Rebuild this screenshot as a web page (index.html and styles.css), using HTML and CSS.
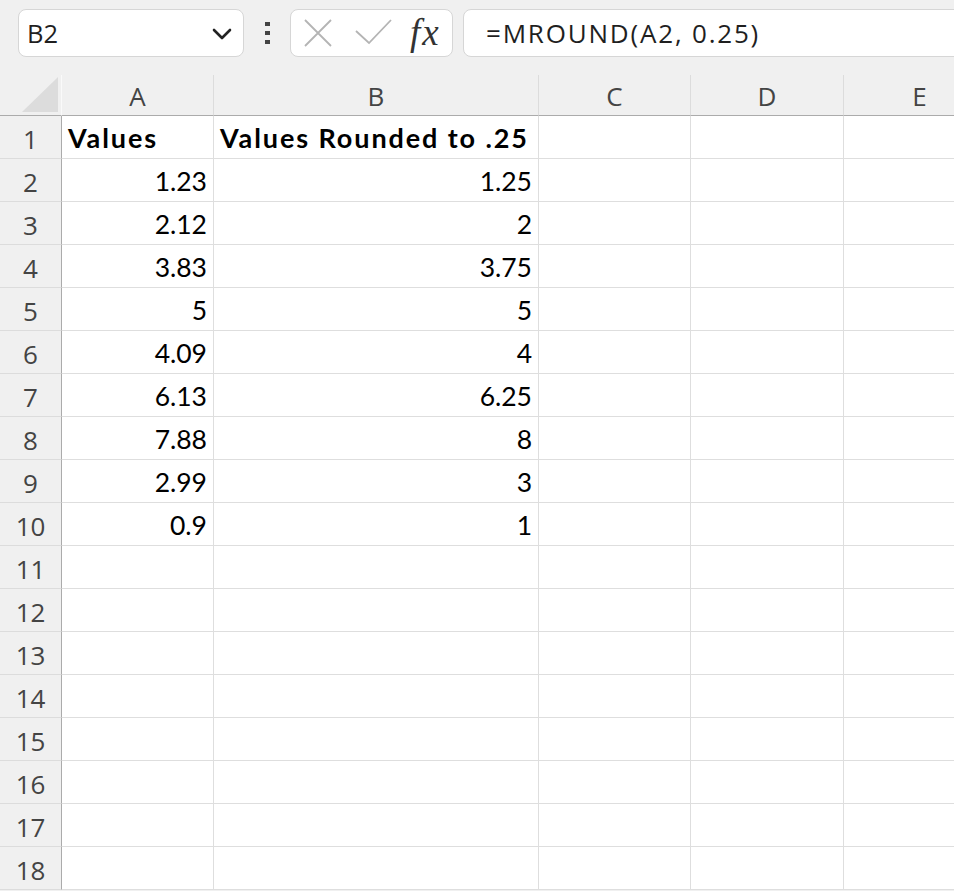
FILE: index.html
```html
<!DOCTYPE html>
<html>
<head>
<meta charset="utf-8">
<link rel="stylesheet" href="styles.css">
</head>
<body>
<div class="toolbar">
  <div class="namebox">
    <span class="name">B2</span>
    <svg class="chev" width="20" height="12" viewBox="0 0 20 12"><path d="M2 2 L10 10 L18 2" fill="none" stroke="#222" stroke-width="2.6" stroke-linecap="round" stroke-linejoin="round"/></svg>
  </div>
  <div class="dots"><span></span><span></span><span></span></div>
  <div class="fxbox">
    <svg class="ico" width="30" height="30" viewBox="0 0 30 30"><path d="M2 2 L28 28 M28 2 L2 28" stroke="#b4b4b4" stroke-width="1.8" fill="none"/></svg>
    <svg class="ico" width="38" height="30" viewBox="0 0 38 30"><path d="M1 13 L14 25 L36 2" stroke="#b4b4b4" stroke-width="1.8" fill="none"/></svg>
    <span class="fx">fx</span>
  </div>
  <div class="formula">=MROUND(A2, 0.25)</div>
</div>
<div class="sheet">
  <div class="corner"><div class="tri"></div></div>
  <div class="colh">A</div>
  <div class="colh">B</div>
  <div class="colh">C</div>
  <div class="colh">D</div>
  <div class="colh">E</div>

  <div class="rowh">1</div><div class="cell bold">Values</div><div class="cell bold">Values Rounded to .25</div><div class="cell"></div><div class="cell"></div><div class="cell"></div>
  <div class="rowh">2</div><div class="cell num">1.23</div><div class="cell num">1.25</div><div class="cell"></div><div class="cell"></div><div class="cell"></div>
  <div class="rowh">3</div><div class="cell num">2.12</div><div class="cell num">2</div><div class="cell"></div><div class="cell"></div><div class="cell"></div>
  <div class="rowh">4</div><div class="cell num">3.83</div><div class="cell num">3.75</div><div class="cell"></div><div class="cell"></div><div class="cell"></div>
  <div class="rowh">5</div><div class="cell num">5</div><div class="cell num">5</div><div class="cell"></div><div class="cell"></div><div class="cell"></div>
  <div class="rowh">6</div><div class="cell num">4.09</div><div class="cell num">4</div><div class="cell"></div><div class="cell"></div><div class="cell"></div>
  <div class="rowh">7</div><div class="cell num">6.13</div><div class="cell num">6.25</div><div class="cell"></div><div class="cell"></div><div class="cell"></div>
  <div class="rowh">8</div><div class="cell num">7.88</div><div class="cell num">8</div><div class="cell"></div><div class="cell"></div><div class="cell"></div>
  <div class="rowh">9</div><div class="cell num">2.99</div><div class="cell num">3</div><div class="cell"></div><div class="cell"></div><div class="cell"></div>
  <div class="rowh">10</div><div class="cell num">0.9</div><div class="cell num">1</div><div class="cell"></div><div class="cell"></div><div class="cell"></div>
  <div class="rowh">11</div><div class="cell"></div><div class="cell"></div><div class="cell"></div><div class="cell"></div><div class="cell"></div>
  <div class="rowh">12</div><div class="cell"></div><div class="cell"></div><div class="cell"></div><div class="cell"></div><div class="cell"></div>
  <div class="rowh">13</div><div class="cell"></div><div class="cell"></div><div class="cell"></div><div class="cell"></div><div class="cell"></div>
  <div class="rowh">14</div><div class="cell"></div><div class="cell"></div><div class="cell"></div><div class="cell"></div><div class="cell"></div>
  <div class="rowh">15</div><div class="cell"></div><div class="cell"></div><div class="cell"></div><div class="cell"></div><div class="cell"></div>
  <div class="rowh">16</div><div class="cell"></div><div class="cell"></div><div class="cell"></div><div class="cell"></div><div class="cell"></div>
  <div class="rowh">17</div><div class="cell"></div><div class="cell"></div><div class="cell"></div><div class="cell"></div><div class="cell"></div>
  <div class="rowh">18</div><div class="cell"></div><div class="cell"></div><div class="cell"></div><div class="cell"></div><div class="cell"></div>
</div>
</body>
</html>
```
FILE: styles.css
```css
html, body {
  margin: 0;
  padding: 0;
  background: #f0f0f0;
  overflow: hidden;
  width: 954px;
  height: 891px;
}
.toolbar {
  height: 75px;
  box-sizing: border-box;
  padding: 9px 0 0 18px;
  display: flex;
  align-items: flex-start;
  font-family: "Open Sans", sans-serif;
  color: #1f1f1f;
  width: 1100px;
}
.namebox {
  width: 226px;
  height: 48px;
  box-sizing: border-box;
  background: #fff;
  border: 1px solid #d6d6d6;
  border-radius: 8px;
  display: flex;
  align-items: center;
  justify-content: space-between;
  padding: 0 11px 0 8px;
}
.name {
  font-size: 25.5px;
  line-height: 46px;
}
.chev { display: block; margin-top: 2px; }
.dots {
  width: 46px;
  height: 48px;
  display: flex;
  flex-direction: column;
  align-items: center;
  justify-content: center;
  gap: 4.5px;
}
.dots span {
  width: 5px;
  height: 4.5px;
  background: #444;
  display: block;
}
.fxbox {
  width: 163px;
  height: 48px;
  box-sizing: border-box;
  background: #fff;
  border: 1px solid #d6d6d6;
  border-radius: 8px;
  display: flex;
  align-items: center;
  padding: 0 0 0 12px;
}
.fxbox .ico { display: block; }
.fxbox .ico:first-child { margin-right: 22px; }
.fx {
  font-family: "Liberation Serif", serif;
  font-style: italic;
  font-size: 37px;
  color: #333;
  margin-left: 17px;
  line-height: 44px;
  letter-spacing: 2px;
}
.formula {
  margin-left: 10px;
  flex: 1;
  height: 48px;
  box-sizing: border-box;
  background: #fff;
  border: 1px solid #d6d6d6;
  border-radius: 8px;
  padding-left: 22px;
  font-size: 26px;
  letter-spacing: 1.8px;
  line-height: 46px;
  white-space: nowrap;
}
.sheet {
  display: grid;
  grid-template-columns: 62px 152px 325px 152px 153px 152px;
  grid-template-rows: 41px;
  grid-auto-rows: 43px;
  width: 996px;
  background: #fff;
}
.corner {
  background: #f0f0f0;
  border-right: 1px solid #fafafa;
  border-bottom: 1px solid #ababab;
  position: relative;
}
.tri {
  position: absolute;
  left: 22px;
  top: 2px;
  width: 36px;
  height: 35px;
  background: #dcdcdc;
  clip-path: polygon(100% 0, 100% 100%, 0 100%);
}
.colh {
  background: #f0f0f0;
  border-right: 1px solid #dcdcdc;
  border-bottom: 1px solid #ababab;
  font-family: "Open Sans", sans-serif;
  font-size: 26px;
  color: #444;
  text-align: center;
  line-height: 42px;
}
.rowh {
  background: #f0f0f0;
  border-right: 1px solid #ababab;
  border-bottom: 1px solid #dcdcdc;
  font-family: "Open Sans", sans-serif;
  font-size: 26px;
  color: #444;
  text-align: center;
  line-height: 46px;
}
.cell {
  border-right: 1px solid #dedede;
  border-bottom: 1px solid #dedede;
  font-family: Lato, sans-serif;
  font-size: 26.5px;
  color: #000;
  line-height: 44px;
  padding: 0 6px 0 6px;
  white-space: nowrap;
  overflow: hidden;
}
.num { text-align: right; }
.bold {
  font-weight: bold;
  font-size: 27px;
  letter-spacing: 1.9px;
}
```
